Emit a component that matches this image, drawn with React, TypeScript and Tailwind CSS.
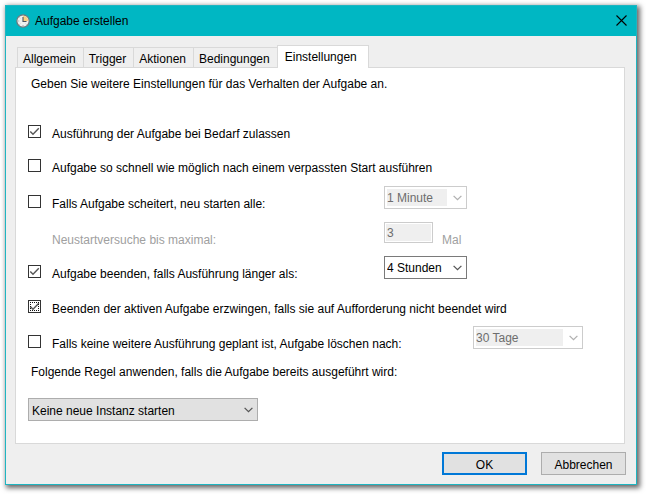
import { useState, type ReactNode } from "react";
import clsx from "clsx";

const tabs = ["Allgemein", "Trigger", "Aktionen", "Bedingungen", "Einstellungen"];

function ClockIcon() {
  return (
    <svg className="h-[14px] w-[14px] shrink-0" viewBox="0 0 14 14" aria-hidden="true">
      <circle cx="7" cy="7" r="6.2" fill="#eef0f0" stroke="#6f767a" strokeWidth="1.2" />
      <path d="M7 7V1.8A5.2 5.2 0 0 1 12.2 7Z" fill="#fbcf80" />
      <path d="M7 3v4.5h3.5" fill="none" stroke="#4a5560" strokeWidth="1.1" />
      <path d="M2.2 7h1M7 11v1M3.6 3.6l.6.6M3.6 10.4l.6-.6M10.4 10.4l-.6-.6" stroke="#8d949a" strokeWidth=".8" />
    </svg>
  );
}

type CheckProps = {
  label: string;
  defaultChecked?: boolean;
  focused?: boolean;
  className?: string;
};

function Check({ label, defaultChecked, focused, className }: CheckProps) {
  return (
    <label className={clsx("flex shrink-0 items-start gap-[11px] pt-[9px]", className)}>
      <span className="relative h-[13px] w-[13px] shrink-0">
        <input
          type="checkbox"
          defaultChecked={defaultChecked}
          className="peer block h-[13px] w-[13px] appearance-none border border-[#333] bg-white outline-none"
        />
        <svg
          className="pointer-events-none absolute inset-0 hidden h-[13px] w-[13px] peer-checked:block"
          viewBox="0 0 13 13"
          fill="none"
          aria-hidden="true"
        >
          <path d="M2.3 6.5 5 9.3l5.8-6" stroke="#555" strokeWidth="1.4" />
          {focused && (
            <path
              d="M2 2.5h9M2 10.5h9M2.5 4v6M10.5 4v6"
              stroke="#111"
              strokeDasharray="1 1"
              shapeRendering="crispEdges"
            />
          )}
        </svg>
      </span>
      <span className="pt-px">{label}</span>
    </label>
  );
}

type DropdownProps = {
  label: string;
  options: string[];
  variant?: "field" | "button";
  disabled?: boolean;
  className?: string;
};

function Dropdown({ label, options, variant = "field", disabled, className }: DropdownProps) {
  return (
    <div
      className={clsx(
        "relative h-[23px] shrink-0 border",
        variant === "button" && "border-[#adadad] bg-[#e1e1e1]",
        variant === "field" && (disabled ? "border-[#ccc] bg-white" : "border-[#7a7a7a] bg-white"),
        className
      )}
    >
      <select
        aria-label={label}
        disabled={disabled}
        className={clsx(
          "block h-full w-full appearance-none outline-none",
          disabled && "border-2 border-r-[19px] border-white bg-[#efefef] text-[#6d6d6d] opacity-100",
          !disabled && "bg-transparent text-black",
          !disabled && (variant === "button" ? "pt-0.5 pl-[3px]" : "pl-0.5")
        )}
      >
        {options.map((option) => (
          <option key={option}>{option}</option>
        ))}
      </select>
      <svg
        className={clsx(
          "pointer-events-none absolute top-2 right-1 h-[6px] w-[9px]",
          disabled ? "text-[#b0b0b0]" : "text-[#555]"
        )}
        viewBox="0 0 9 6"
        fill="none"
        aria-hidden="true"
      >
        <path d="M.6.9 4.5 4.6 8.4.9" stroke="currentColor" strokeWidth="1.3" />
      </svg>
    </div>
  );
}

function Row({ children, className }: { children: ReactNode; className: string }) {
  return <div className={clsx("flex items-start", className)}>{children}</div>;
}

export default function App() {
  const [active, setActive] = useState("Einstellungen");

  return (
    <main className="bg-white pt-[5px] pr-[9px] pb-[9px] pl-[5px] font-['Liberation_Sans',Arial,sans-serif] text-[12px] leading-4 text-black">
      <div className="border border-[#1fb5c1] bg-[#efefef] shadow-[2px_2px_5px_1px_rgba(0,0,0,0.6)]">
        <header className="flex h-[30px] items-center justify-between bg-[#00b7c3] pr-2 pl-[10px]">
          <div className="flex items-center gap-[5px]">
            <ClockIcon />
            <h1>Aufgabe erstellen</h1>
          </div>
          <button type="button" aria-label="Schließen" className="p-px pb-[3px]">
            <svg className="h-[11px] w-[11px]" viewBox="0 0 11 11" aria-hidden="true">
              <path d="m.5.5 10 10m0-10-10 10" stroke="#000" strokeWidth="1.1" />
            </svg>
          </button>
        </header>

        <div className="py-[9px] pr-[10px] pl-[9px]">
          <div role="tablist" className="flex items-end pl-0.5">
            {tabs.map((tab) => (
              <button
                key={tab}
                type="button"
                role="tab"
                aria-selected={tab === active}
                onClick={() => setActive(tab)}
                className={clsx(
                  "border-[#d9d9d9]",
                  tab === active
                    ? "relative -mb-px h-[23px] border border-b-0 bg-white pr-[11px] pb-px pl-[7px]"
                    : "h-5 border-t border-l pt-0.5 pr-[7px] pl-[5px]"
                )}
              >
                {tab}
              </button>
            ))}
          </div>

          <section className="mr-px border border-[#d9d9d9] bg-white px-3 pt-2 pb-[22px]">
            <p className="pl-[3px]">Geben Sie weitere Einstellungen für das Verhalten der Aufgabe an.</p>

            <div className="pt-6">
              <Row className="h-[34px]">
                <Check label="Ausführung der Aufgabe bei Bedarf zulassen" defaultChecked />
              </Row>
              <Row className="h-[36px]">
                <Check label="Aufgabe so schnell wie möglich nach einem verpassten Start ausführen" />
              </Row>
              <Row className="h-[36px]">
                <Check label="Falls Aufgabe scheitert, neu starten alle:" className="w-[356px]" />
                <Dropdown label="Neustartintervall" options={["1 Minute"]} disabled className="w-[83px]" />
              </Row>
              <Row className="h-[34px] text-[#a0a0a0]">
                <label htmlFor="retries" className="w-[356px] shrink-0 pt-[10px] pl-6">
                  Neustartversuche bis maximal:
                </label>
                <input
                  id="retries"
                  type="text"
                  defaultValue="3"
                  disabled
                  className="h-[21px] w-[49px] border border-[#ccc] bg-[#efefef] px-0.5 text-[#6d6d6d] inset-ring inset-ring-white"
                />
                <span className="pt-[10px] pl-[9px]">Mal</span>
              </Row>
              <Row className="h-[35px]">
                <Check label="Aufgabe beenden, falls Ausführung länger als:" defaultChecked className="w-[356px]" />
                <Dropdown label="Maximale Laufzeit" options={["4 Stunden"]} className="w-[83px]" />
              </Row>
              <Row className="h-[35px]">
                <Check
                  label="Beenden der aktiven Aufgabe erzwingen, falls sie auf Aufforderung nicht beendet wird"
                  defaultChecked
                  focused
                />
              </Row>
              <Row className="h-[35px]">
                <Check label="Falls keine weitere Ausführung geplant ist, Aufgabe löschen nach:" className="w-[445px]" />
                <Dropdown label="Löschen nach" options={["30 Tage"]} disabled className="w-[110px]" />
              </Row>
            </div>

            <p className="pt-[3px] pl-[3px]">Folgende Regel anwenden, falls die Aufgabe bereits ausgeführt wird:</p>
            <Dropdown
              label="Regel"
              variant="button"
              options={["Keine neue Instanz starten"]}
              className="mt-[18px] w-[230px]"
            />
          </section>

          <footer className="flex justify-end gap-[14px] pt-2">
            <button type="button" className="h-[23px] w-[85px] border-2 border-[#0078d7] bg-[#e1e1e1] pt-0.5">
              OK
            </button>
            <button type="button" className="h-[23px] w-[85px] border border-[#adadad] bg-[#e1e1e1] pt-0.5">
              Abbrechen
            </button>
          </footer>
        </div>
      </div>
    </main>
  );
}
